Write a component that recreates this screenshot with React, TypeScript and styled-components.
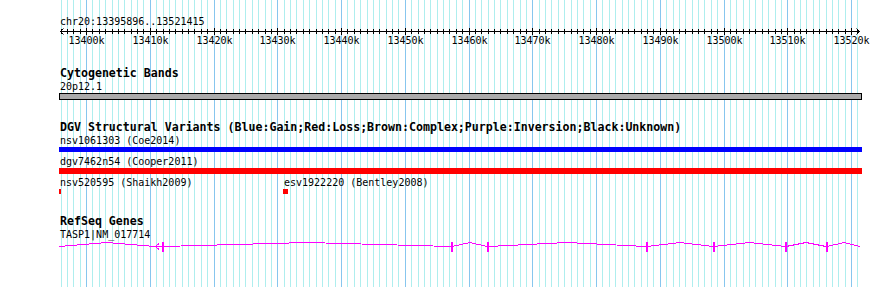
import React from "react";
import styled, { createGlobalStyle } from "styled-components";

const MONO = `"DejaVu Sans Mono", "Liberation Mono", monospace`;

const GlobalStyle = createGlobalStyle`
  html, body { margin: 0; padding: 0; background: #ffffff; }
  body { font-family: ${MONO}; color: #000; }
`;

/* ---------- data ---------- */
const xk = (k: number) => Math.round(86 + (k - 13400) * 6.375);
const KS: number[] = [];
for (let k = 13396; k <= 13521; k++) KS.push(k);
const MAJORS = KS.filter((k) => k % 10 === 0);

const EXONS = [162, 451, 487, 646, 713, 785, 826];
const BASE = 5.5; // local y of intron baseline (page row 246)
const PEAK = 1.5; // local y of hat peak (page row 242)

type Intron = [number, number];
const INTRONS: Intron[] = [
  [59, 155],
  [163, 451],
  [452, 487],
  [488, 646],
  [647, 713],
  [714, 785],
  [786, 826],
  [827, 860],
];

type Feature = { left: number; width: number; label: string };
const SMALL_LOSSES: Feature[] = [
  { left: 59, width: 2, label: "nsv520595 (Shaikh2009)" },
  { left: 283, width: 5, label: "esv1922220 (Bentley2008)" },
];

/* ---------- styles ---------- */
const Panel = styled.div`
  position: relative;
  width: 890px;
  height: 302px;
  overflow: hidden;
  background: #ffffff;
`;

const GridLayer = styled.svg`
  position: absolute;
  left: 0;
  top: 0;
  display: block;
`;

const Tracks = styled.div`
  position: relative;
  display: flex;
  flex-direction: column;
  padding-top: 15px;
`;

const Label = styled.div`
  font-family: ${MONO};
  font-size: 10px;
  line-height: 13px;
  height: 13px;
  white-space: pre;
  padding-left: 60px;
  color: #000;
`;

const Title = styled.div`
  font-family: ${MONO};
  font-weight: bold;
  font-size: 11.6px;
  line-height: 13px;
  height: 13px;
  white-space: pre;
  padding-left: 60px;
  color: #000;
`;

const RulerSvg = styled.svg`
  display: block;
  width: 890px;
  height: 20px;
  font-family: ${MONO};
  font-size: 10px;
`;

const Track = styled.section<{ $gap: number }>`
  display: flex;
  flex-direction: column;
  margin-top: ${(p) => p.$gap}px;
`;

const BandBox = styled.div`
  margin-left: 59px;
  width: 803px;
  height: 7px;
  box-sizing: border-box;
  border: 1px solid #000;
  background: #aaaaaa;
`;

const Bar = styled.div<{ $color: string; $h: number; $after: number }>`
  margin-left: 59px;
  width: 803px;
  height: ${(p) => p.$h}px;
  background: ${(p) => p.$color};
  margin-bottom: ${(p) => p.$after}px;
`;

const FeatureRow = styled.div`
  position: relative;
  height: 18px;
`;

const FeatureGroup = styled.div`
  position: absolute;
  top: 0;
  display: flex;
  flex-direction: column;
`;

const FeatureText = styled.span`
  font-family: ${MONO};
  font-size: 10px;
  line-height: 13px;
  height: 13px;
  white-space: pre;
  padding-left: 1px;
`;

const Mark = styled.div`
  height: 5px;
  background: #ff0000;
`;

const GeneSvg = styled.svg`
  display: block;
  width: 890px;
  height: 12px;
`;

/* ---------- component ---------- */
export default function App() {
  return (
    <>
      <GlobalStyle />
      <Panel>
        <GridLayer width={890} height={302} shapeRendering="crispEdges">
          {KS.map((k) => (
            <line
              key={k}
              x1={xk(k) + 0.5}
              x2={xk(k) + 0.5}
              y1={0}
              y2={287}
              stroke={k % 10 === 0 ? "#87c6ee" : "#aeeeee"}
              strokeWidth={1}
            />
          ))}
        </GridLayer>

        <Tracks>
          <Label>chr20:13395896..13521415</Label>
          <RulerSvg viewBox="0 0 890 20">
            <g shapeRendering="crispEdges" stroke="#000" strokeWidth={1}>
              <line x1={60} x2={860} y1={3.5} y2={3.5} />
              {KS.map((k) => (
                <line
                  key={k}
                  x1={xk(k) + 0.5}
                  x2={xk(k) + 0.5}
                  y1={k % 10 === 0 ? 0 : 1}
                  y2={k % 10 === 0 ? 7 : 6}
                />
              ))}
            </g>
            <g stroke="#000" strokeWidth={1} fill="none">
              <polyline points="63.5,0.5 60.5,3.5 63.5,6.5" />
              <polyline points="856.5,0.5 859.5,3.5 856.5,6.5" />
            </g>
            {MAJORS.map((k) => (
              <text key={k} x={xk(k) + 0.5} y={16} textAnchor="middle" fill="#000">
                {`${k}k`}
              </text>
            ))}
          </RulerSvg>

          <Track $gap={19}>
            <Title>Cytogenetic Bands</Title>
            <Label>20p12.1</Label>
            <BandBox />
          </Track>

          <Track $gap={21}>
            <Title>DGV Structural Variants (Blue:Gain;Red:Loss;Brown:Complex;Purple:Inversion;Black:Unknown)</Title>
            <Label>nsv1061303 (Coe2014)</Label>
            <Bar $color="#0000ff" $h={5} $after={3} />
            <Label>dgv7462n54 (Cooper2011)</Label>
            <Bar $color="#ff0000" $h={6} $after={2} />
            <FeatureRow>
              {SMALL_LOSSES.map((f) => (
                <FeatureGroup key={f.label} style={{ left: f.left }}>
                  <FeatureText>{f.label}</FeatureText>
                  <Mark style={{ width: f.width }} />
                </FeatureGroup>
              ))}
            </FeatureRow>
          </Track>

          <Track $gap={21}>
            <Title>RefSeq Genes</Title>
            <Label>TASP1|NM_017714</Label>
            <GeneSvg viewBox="0 0 890 12" shapeRendering="crispEdges">
              <g stroke="#ff00ff" strokeWidth={1} fill="none">
                {INTRONS.map(([a, b]) => (
                  <polyline
                    key={a}
                    points={`${a},${BASE} ${Math.round((a + b) / 2)},${PEAK} ${b},${BASE}`}
                  />
                ))}
                <line x1={155} x2={162} y1={BASE} y2={BASE} />
                <polyline points={`159,2.5 155.5,${BASE} 159,8.5`} />
              </g>
              {EXONS.map((x) => (
                <rect key={x} x={x} y={1} width={2} height={10} fill="#ff00ff" />
              ))}
            </GeneSvg>
          </Track>
        </Tracks>
      </Panel>
    </>
  );
}
